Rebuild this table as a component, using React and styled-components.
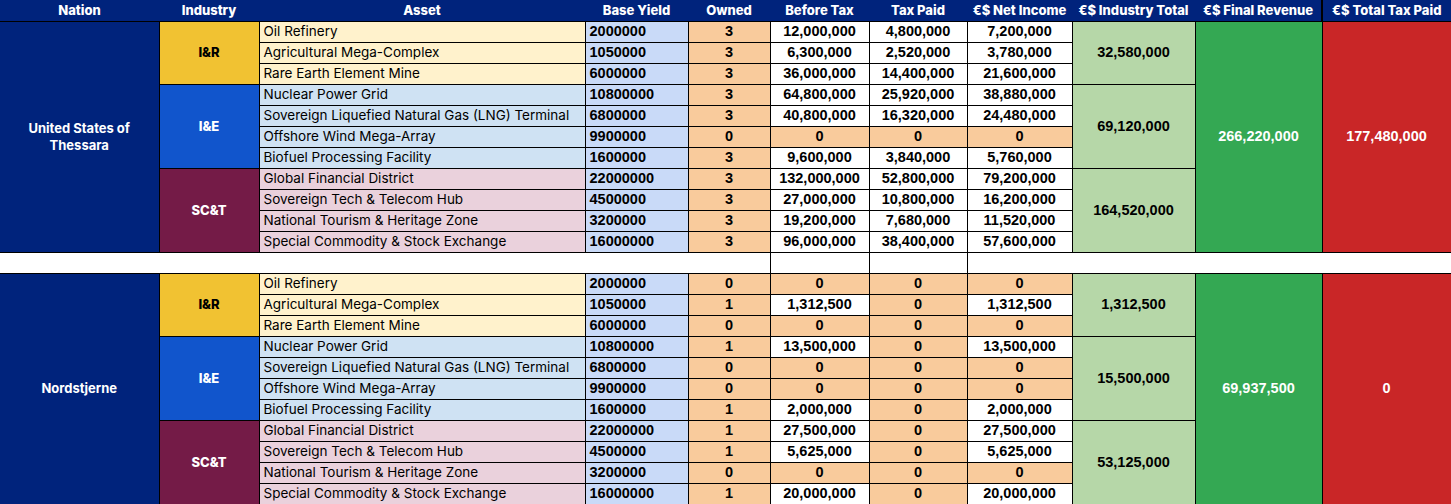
import React from 'react';
import styled, { createGlobalStyle, css } from 'styled-components';

const GlobalStyle = createGlobalStyle`
  html, body {
    margin: 0;
    padding: 0;
    background: #ffffff;
  }
`;

const color = {
  navy: '#00237c',
  yellow: '#f1c232',
  blue: '#1155cc',
  maroon: '#741b47',
  lightYellow: '#fff2cc',
  lightBlue: '#cfe2f3',
  lightPink: '#ead1dc',
  yieldBlue: '#c9daf8',
  orange: '#f9cb9c',
  lightGreen: '#b6d7a8',
  green: '#34a853',
  red: '#c92627',
};

const industryTheme = {
  'I&R': { bg: color.yellow, fg: '#000000', asset: color.lightYellow },
  'I&E': { bg: color.blue, fg: '#ffffff', asset: color.lightBlue },
  'SC&T': { bg: color.maroon, fg: '#ffffff', asset: color.lightPink },
};

const widths = [159, 100, 326, 103, 82, 99, 98, 105, 123, 127, 129];

const Table = styled.table`
  width: 1451px;
  table-layout: fixed;
  border-collapse: collapse;
  border-spacing: 0;
`;

const HeadRow = styled.tr`
  height: 21px;
  background: ${color.navy};
`;

const HeadCell = styled.th`
  padding: 0;
  font-family: Inter, 'Liberation Sans', sans-serif;
  font-weight: 800;
  font-size: 13px;
  color: #ffffff;
  text-align: center;
  white-space: nowrap;
  border-bottom: 1px solid #000;
  ${(p) => p.$divider && css`border-left: 2px solid #000;`};
  ${(p) => p.$edge && css`border-right: 1px solid #000;`};
`;

const Row = styled.tr`
  height: 21px;
`;

const cellBase = css`
  padding: 0 4px;
  border: 1px solid #000;
  vertical-align: middle;
  white-space: nowrap;
  overflow: hidden;
  line-height: 1;
`;

const numberFont = css`
  font-family: 'Liberation Sans', Arial, sans-serif;
  font-weight: 700;
  font-size: 14.5px;
`;

const NationCell = styled.td`
  ${cellBase};
  border-left: none;
  background: ${color.navy};
  color: #ffffff;
  font-family: Inter, 'Liberation Sans', sans-serif;
  font-weight: 700;
  font-size: 13px;
  line-height: 17px;
  text-align: center;
  white-space: normal;
`;

const IndustryCell = styled.td`
  ${cellBase};
  background: ${(p) => industryTheme[p.$kind].bg};
  color: ${(p) => industryTheme[p.$kind].fg};
  font-family: Inter, 'Liberation Sans', sans-serif;
  font-weight: 800;
  font-size: 13px;
  text-align: center;
`;

const AssetCell = styled.td`
  ${cellBase};
  background: ${(p) => industryTheme[p.$kind].asset};
  color: #000000;
  font-family: Inter, 'Liberation Sans', sans-serif;
  font-size: 13.5px;
  text-align: left;
`;

const YieldCell = styled.td`
  ${cellBase};
  ${numberFont};
  background: ${color.yieldBlue};
  text-align: left;
`;

const NumCell = styled.td`
  ${cellBase};
  ${numberFont};
  background: ${(p) => (p.$zero ? color.orange : '#ffffff')};
  text-align: center;
`;

const OwnedCell = styled(NumCell)`
  background: ${color.orange};
`;

const TotalCell = styled.td`
  ${cellBase};
  ${numberFont};
  background: ${color.lightGreen};
  text-align: center;
`;

const SummaryCell = styled.td`
  ${cellBase};
  ${numberFont};
  background: ${(p) => (p.$tone === 'tax' ? color.red : color.green)};
  color: #ffffff;
  text-align: center;
`;

const GapCell = styled.td`
  padding: 0;
  background: #ffffff;
  ${(p) => p.$lined && css`border-left: 1px solid #000;`};
`;

const headers = [
  'Nation', 'Industry', 'Asset', 'Base Yield', 'Owned', 'Before Tax', 'Tax Paid',
  '€$ Net Income', '€$ Industry Total', '€$ Final Revenue', '€$ Total Tax Paid',
];

const assets = {
  'I&R': [
    ['Oil Refinery', '2000000'],
    ['Agricultural Mega-Complex', '1050000'],
    ['Rare Earth Element Mine', '6000000'],
  ],
  'I&E': [
    ['Nuclear Power Grid', '10800000'],
    ['Sovereign Liquefied Natural Gas (LNG) Terminal', '6800000'],
    ['Offshore Wind Mega-Array', '9900000'],
    ['Biofuel Processing Facility', '1600000'],
  ],
  'SC&T': [
    ['Global Financial District', '22000000'],
    ['Sovereign Tech & Telecom Hub', '4500000'],
    ['National Tourism & Heritage Zone', '3200000'],
    ['Special Commodity & Stock Exchange', '16000000'],
  ],
};

const nations = [
  {
    name: 'United States of Thessara',
    revenue: '266,220,000',
    tax: '177,480,000',
    industries: {
      'I&R': {
        total: '32,580,000',
        rows: [
          ['3', '12,000,000', '4,800,000', '7,200,000'],
          ['3', '6,300,000', '2,520,000', '3,780,000'],
          ['3', '36,000,000', '14,400,000', '21,600,000'],
        ],
      },
      'I&E': {
        total: '69,120,000',
        rows: [
          ['3', '64,800,000', '25,920,000', '38,880,000'],
          ['3', '40,800,000', '16,320,000', '24,480,000'],
          ['0', '0', '0', '0'],
          ['3', '9,600,000', '3,840,000', '5,760,000'],
        ],
      },
      'SC&T': {
        total: '164,520,000',
        rows: [
          ['3', '132,000,000', '52,800,000', '79,200,000'],
          ['3', '27,000,000', '10,800,000', '16,200,000'],
          ['3', '19,200,000', '7,680,000', '11,520,000'],
          ['3', '96,000,000', '38,400,000', '57,600,000'],
        ],
      },
    },
  },
  {
    name: 'Nordstjerne',
    revenue: '69,937,500',
    tax: '0',
    industries: {
      'I&R': {
        total: '1,312,500',
        rows: [
          ['0', '0', '0', '0'],
          ['1', '1,312,500', '0', '1,312,500'],
          ['0', '0', '0', '0'],
        ],
      },
      'I&E': {
        total: '15,500,000',
        rows: [
          ['1', '13,500,000', '0', '13,500,000'],
          ['0', '0', '0', '0'],
          ['0', '0', '0', '0'],
          ['1', '2,000,000', '0', '2,000,000'],
        ],
      },
      'SC&T': {
        total: '53,125,000',
        rows: [
          ['1', '27,500,000', '0', '27,500,000'],
          ['1', '5,625,000', '0', '5,625,000'],
          ['0', '0', '0', '0'],
          ['1', '20,000,000', '0', '20,000,000'],
        ],
      },
    },
  },
];

const NationBlock = ({ nation }) => {
  const kinds = Object.keys(assets);
  const span = kinds.reduce((n, k) => n + assets[k].length, 0);

  return kinds.flatMap((kind, ki) =>
    assets[kind].map(([asset, base], ri) => {
      const [owned, before, tax, net] = nation.industries[kind].rows[ri];
      const first = ki === 0 && ri === 0;
      return (
        <Row key={`${kind}-${asset}`}>
          {first && <NationCell rowSpan={span}>{nation.name}</NationCell>}
          {ri === 0 && (
            <IndustryCell $kind={kind} rowSpan={assets[kind].length}>{kind}</IndustryCell>
          )}
          <AssetCell $kind={kind}>{asset}</AssetCell>
          <YieldCell>{base}</YieldCell>
          <OwnedCell>{owned}</OwnedCell>
          <NumCell $zero={before === '0'}>{before}</NumCell>
          <NumCell $zero={tax === '0'}>{tax}</NumCell>
          <NumCell $zero={net === '0'}>{net}</NumCell>
          {ri === 0 && (
            <TotalCell rowSpan={assets[kind].length}>{nation.industries[kind].total}</TotalCell>
          )}
          {first && <SummaryCell rowSpan={span}>{nation.revenue}</SummaryCell>}
          {first && <SummaryCell $tone="tax" rowSpan={span}>{nation.tax}</SummaryCell>}
        </Row>
      );
    })
  );
};

export default function App() {
  return (
    <>
      <GlobalStyle />
      <Table>
        <colgroup>
          {widths.map((w, i) => <col key={i} style={{ width: w }} />)}
        </colgroup>
        <thead>
          <HeadRow>
            {headers.map((h, i) => (
              <HeadCell key={h} $divider={i === 10} $edge={i === 10}>{h}</HeadCell>
            ))}
          </HeadRow>
        </thead>
        <tbody>
          <NationBlock nation={nations[0]} />
          <Row>
            {widths.map((w, i) => <GapCell key={i} $lined={i >= 5 && i <= 7} />)}
          </Row>
          <NationBlock nation={nations[1]} />
        </tbody>
      </Table>
    </>
  );
}
